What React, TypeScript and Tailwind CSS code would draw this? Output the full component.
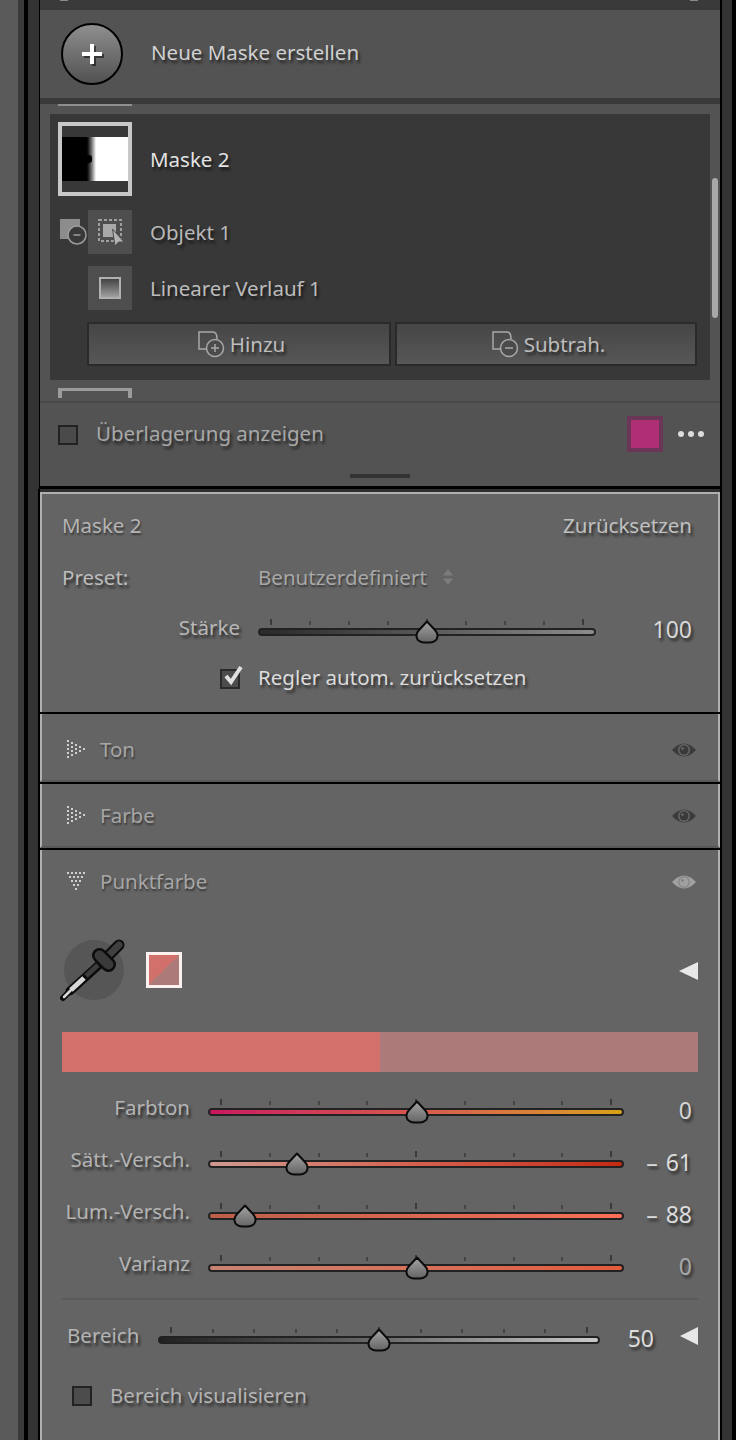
const shadow = '[text-shadow:2px_3px_3px_rgba(0,0,0,0.6)]';
const softShadow = '[text-shadow:1px_2px_2px_rgba(0,0,0,0.45)]';

function Thumb() {
  return (
    <svg width="24" height="24" viewBox="0 0 24 24" className="absolute -translate-x-1/2 -translate-y-1/2" style={{ left: 0, top: 0 }}>
      <defs>
        <linearGradient id="thumbFill" x1="0" y1="0" x2="0" y2="1">
          <stop offset="0" stopColor="#a4a4a4" />
          <stop offset="1" stopColor="#646464" />
        </linearGradient>
      </defs>
      <path d="M12 1.500 L19.500 9.500 Q23 13 22.500 16.500 C22 20 19 22.500 15 22.500 L9 22.500 C5 22.500 2 20 1.500 16.500 Q1 13 4.500 9.500 Z" fill="url(#thumbFill)" stroke="#0b0b0b" strokeWidth="2" strokeLinejoin="round" />
    </svg>
  );
}

function Slider({ trackClass, width, ticks, thumb }: { trackClass: string; width: string; ticks: number; thumb?: number }) {
  const mid = (ticks - 1) / 2;
  return (
    <div className={`relative ${width}`}>
      <div className="flex justify-between items-end h-[6px] mb-[3px] px-[12px]">
        {Array.from({ length: ticks }).map((_, i) => (
          <span key={i} className={i === 0 || i === ticks - 1 || i === mid ? 'w-[2px] h-[6px] bg-[#3a3a3a]' : 'w-[2px] h-[4px] bg-[#444444]'} />
        ))}
      </div>
      <div className={`relative h-[8px] rounded-full border-2 border-[#222222] ${trackClass}`}>
        {thumb !== undefined && (
          <div className="absolute top-1/2" style={{ left: `${thumb}%` }}>
            <Thumb />
          </div>
        )}
      </div>
    </div>
  );
}

function ColorRow({ label, value, valueClass, trackClass, thumb }: { label: string; value: string; valueClass: string; trackClass: string; thumb: number }) {
  return (
    <div className="flex items-center h-[52px]">
      <div className={`w-[130px] ml-[18px] text-right text-[20.5px] text-[#b4b4b4] ${shadow} -translate-y-[4px]`}>{label}</div>
      <div className="ml-[18px] -translate-y-[4px]">
        <Slider width="w-[416px]" ticks={9} trackClass={trackClass} thumb={thumb} />
      </div>
      <div className={`w-[68px] text-right text-[23px] [word-spacing:2px] ${valueClass} ${shadow} -translate-y-[2px]`}>{value}</div>
    </div>
  );
}

function DotTriangle({ open }: { open?: boolean }) {
  const rows = [5, 4, 3, 2, 1];
  const dots: { x: number; y: number }[] = [];
  rows.forEach((n, r) => {
    for (let i = 0; i < n; i++) {
      const a = r * 4;
      const b = (i - (n - 1) / 2) * 4;
      dots.push(open ? { x: 9 + b, y: 1 + a } : { x: 1 + a, y: 9 + b });
    }
  });
  return (
    <svg width="20" height="20" viewBox="0 0 20 20">
      {dots.map((d, i) => (
        <rect key={i} x={d.x} y={d.y} width="2" height="2" fill="#d0d0d0" />
      ))}
    </svg>
  );
}

function Eye({ dim }: { dim?: boolean }) {
  return (
    <svg width="26" height="18" viewBox="0 0 26 18" className="translate-y-[1px]">
      <path d="M1 9 Q13 -4 25 9 Q13 22 1 9 Z" fill={dim ? '#a0a0a0' : '#3a3a3a'} />
      <circle cx="13" cy="9" r="6" fill={dim ? '#888888' : '#666666'} />
      <circle cx="13" cy="9" r="4.500" fill={dim ? '#a0a0a0' : '#3a3a3a'} />
      <circle cx="11.500" cy="7.500" r="1.300" fill={dim ? '#7a7a7a' : '#6a6a6a'} />
    </svg>
  );
}

function SectionHead({ label, open, dim }: { label: string; open?: boolean; dim?: boolean }) {
  return (
    <div className="flex items-center justify-between pl-[24px] pr-[21px]">
      <div className="flex items-center gap-[14px]">
        <DotTriangle open={open} />
        <span className={`text-[20.5px] text-[#a6a6a6] ${softShadow}`}>{label}</span>
      </div>
      <Eye dim={dim} />
    </div>
  );
}

function AddIcon({ minus }: { minus?: boolean }) {
  return (
    <svg width="28" height="28" viewBox="0 0 28 28" fill="none" stroke="#a8a8a8" strokeWidth="1.500">
      <path d="M11 19 H2 V2 H16 Q20 2 20 9" />
      <circle cx="18" cy="18" r="8.500" fill="#4b4b4b" />
      <path d="M14 18 H22" />
      {!minus && <path d="M18 14 V22" />}
    </svg>
  );
}

function MaskButton({ label, minus, width }: { label: string; minus?: boolean; width: string }) {
  return (
    <div className={`${width} h-[44px] flex items-center justify-center gap-[5px] pl-[4px] border-2 border-[#2a2a2a] bg-gradient-to-b from-[#464646] to-[#575757] text-[20.5px] text-[#bdbdbd] ${shadow}`}>
      <AddIcon minus={minus} />
      <span>{label}</span>
    </div>
  );
}

export default function App() {
  return (
    <div className="w-[736px] h-[1440px] overflow-hidden flex bg-[#333333] font-['Noto_Sans','Open_Sans',sans-serif]">
      {/* linke Kante */}
      <div className="w-[18px] bg-[#5a5a5a]" />
      <div className="w-[6px] bg-[#3a3a3a]" />
      <div className="w-[4px] bg-black" />
      <div className="w-[10px] bg-[#333333]" />

      <div className="w-[684px] flex flex-col">
        {/* Masken-Panel */}
        <div className="h-[489px] ml-[1px] border-l border-r-2 border-b-[3px] border-black bg-[#3a3a3a] flex flex-col">
          <div className="h-[10px] flex justify-between items-start pl-[20px] pr-[22px]">
            <span className="w-[8px] h-[1px] bg-[#8a8a8a]" />
            <span className="w-[8px] h-[1px] bg-[#8a8a8a]" />
          </div>
          <div className="h-[88px] bg-[#535353] flex items-center pl-[21px]">
            <div className="w-[62px] h-[62px] rounded-full border-2 border-black bg-gradient-to-b from-[#8f8f8f] to-[#525252] flex items-center justify-center">
              <div className="relative w-[20px] h-[20px] drop-shadow-[2px_2px_0_rgba(0,0,0,0.5)]">
                <div className="absolute left-0 right-0 top-[8px] h-[4px] bg-white" />
                <div className="absolute top-0 bottom-0 left-[8px] w-[4px] bg-white" />
              </div>
            </div>
            <span className={`ml-[28px] text-[20.5px] text-[#d0d0d0] ${shadow} -translate-y-[2px]`}>Neue Maske erstellen</span>
          </div>
          <div className="h-[6px]" />

          {/* Maskenliste */}
          <div className="h-[297px] bg-[#535353] relative pl-[10px] pr-[10px] pt-[10px]">
            <div className="absolute left-[18px] top-0 w-[74px] h-[2px] bg-[#8f8f8f]" />
            <div className="h-[266px] bg-[#383838] relative">
              <div className="flex items-center pl-[8px] pt-[8px]">
                <div className="w-[74px] h-[74px] border-4 border-[#c8c8c8] bg-[#383838] flex items-center">
                  <div className="relative w-full h-[44px] flex">
                    <div className="w-[24px] bg-black" />
                    <div className="w-[10px] bg-gradient-to-r from-black to-white" />
                    <div className="flex-1 bg-white" />
                    <div className="absolute left-[24px] top-[18px] w-[6px] h-[8px] rounded-full bg-black" />
                  </div>
                </div>
                <span className={`ml-[18px] text-[20.5px] text-[#e2e2e2] ${shadow}`}>Maske 2</span>
              </div>

              <div className="flex items-center mt-[14px] pl-[10px]">
                <svg width="28" height="28" viewBox="0 0 28 28">
                  <rect x="0" y="1" width="20" height="20" fill="#8c8c8c" />
                  <circle cx="17" cy="17" r="9" fill="#383838" stroke="#9c9c9c" strokeWidth="1.500" />
                  <path d="M13.500 17 H20.500" stroke="#9c9c9c" strokeWidth="1.500" />
                </svg>
                <div className="w-[44px] h-[44px] bg-[#4e4e4e] flex items-center justify-center">
                  <svg width="28" height="28" viewBox="0 0 28 28" fill="none">
                    <rect x="3" y="2" width="22" height="21" stroke="#a0a0a0" strokeWidth="2" strokeDasharray="3 2" />
                    <rect x="7" y="6" width="13" height="13" fill="#a8a8a8" />
                    <path d="M16.500 11 L28 24 L22.500 24 L19 28 Z" fill="#b4b4b4" stroke="#4e4e4e" strokeWidth="1" />
                  </svg>
                </div>
                <span className={`ml-[18px] text-[20.5px] text-[#b8b8b8] ${shadow}`}>Objekt 1</span>
              </div>

              <div className="flex items-center mt-[12px] pl-[38px]">
                <div className="w-[44px] h-[44px] bg-[#4e4e4e] flex items-center justify-center">
                  <div className="w-[22px] h-[22px] border-2 border-[#b0b0b0] bg-gradient-to-b from-[#444444] to-[#a0a0a0]" />
                </div>
                <span className={`ml-[18px] text-[20.5px] text-[#bcbcbc] ${shadow}`}>Linearer Verlauf 1</span>
              </div>

              <div className="flex gap-[4px] pl-[37px] mt-[12px]">
                <MaskButton label="Hinzu" width="w-[304px]" />
                <MaskButton label="Subtrah." minus width="w-[302px]" />
              </div>

              {/* Scrollbalken */}
              <div className="absolute right-[-8px] top-[64px] w-[6px] h-[140px] rounded-full bg-[#a8a8a8]" />
            </div>
            <div className="absolute left-[18px] top-[284px] w-[74px] h-[10px] border-x-[4px] border-t-[3px] border-[#9c9c9c]" />
          </div>

          {/* Überlagerung */}
          <div className="flex-1 bg-[#535353] border-t-2 border-[#484848] relative flex items-center pl-[18px] pr-[16px] pb-[22px]">
            <div className="w-[20px] h-[20px] border-2 border-[#222222] bg-[#4a4a4a] translate-y-[1px]" />
            <span className={`ml-[18px] text-[20.5px] text-[#a8a8a8] ${shadow}`}>Überlagerung anzeigen</span>
            <div className="ml-auto w-[36px] h-[36px] border-4 border-[#6a3557] bg-[#ae2f74]" />
            <div className="flex gap-[4px] ml-[15px]">
              <span className="w-[6px] h-[6px] rounded-full bg-[#dcdcdc]" />
              <span className="w-[6px] h-[6px] rounded-full bg-[#dcdcdc]" />
              <span className="w-[6px] h-[6px] rounded-full bg-[#dcdcdc]" />
            </div>
            <div className="absolute left-[310px] bottom-[8px] w-[60px] h-[4px] bg-[#333333]" />
          </div>
        </div>

        {/* untere Panels */}
        <div className="flex-1 flex flex-col border-x-2 border-black">
          <div className="h-[3px] bg-[#2e2e2e]" />

          {/* Masken-Einstellungen */}
          <div className="h-[220px] bg-[#646464] border-x-2 border-t-2 border-[#b0b0b0] pt-[17px]">
            <div className="flex justify-between pl-[20px] pr-[26px] h-[32px] items-center -translate-y-[2px]">
              <span className={`text-[20.5px] text-[#b4b4b4] ${softShadow}`}>Maske 2</span>
              <span className={`text-[20.5px] text-[#c0c0c0] ${shadow}`}>Zurücksetzen</span>
            </div>
            <div className="flex items-center mt-[20px] h-[32px] -translate-y-[2px]">
              <span className={`ml-[20px] w-[196px] text-[20.5px] text-[#bcbcbc] ${shadow}`}>Preset:</span>
              <span className={`text-[20.5px] text-[#a8a8a8] ${softShadow}`}>Benutzerdefiniert</span>
              <svg width="12" height="18" viewBox="0 0 12 18" className="ml-[15px]">
                <path d="M6 1 L11 7.500 H1 Z M6 17 L11 10.500 H1 Z" fill="#7c7c7c" />
              </svg>
            </div>
            <div className="flex items-center mt-[18px] h-[32px]">
              <span className={`w-[198px] text-right text-[20.5px] text-[#b8b8b8] ${shadow} -translate-y-[2px]`}>Stärke</span>
              <div className="ml-[18px] -translate-y-[2px]">
                <Slider width="w-[338px]" ticks={9} trackClass="bg-gradient-to-r from-[#2a2a2a] to-[#8c8c8c]" thumb={50} />
              </div>
              <span className={`w-[96px] text-right text-[23px] text-[#d8d8d8] ${shadow}`}>100</span>
            </div>
            <div className="flex items-center mt-[18px] h-[32px] pl-[178px]">
              <div className="relative w-[20px] h-[20px] border-2 border-[#2a2a2a] bg-[#4c4c4c]">
                <svg width="26" height="26" viewBox="0 0 26 26" className="absolute -top-[8px] -left-[1px]">
                  <path d="M5 13 L10 19 L20 4" fill="none" stroke="#e0e0e0" strokeWidth="4" />
                </svg>
              </div>
              <span className={`ml-[18px] text-[20.5px] text-[#dcdcdc] ${shadow} -translate-y-[2px]`}>Regler autom. zurücksetzen</span>
            </div>
          </div>

          <div className="h-[2px] bg-black" />
          <div className="h-[68px] bg-[#646464] border-x-2 border-x-[#b0b0b0] border-b-2 border-b-[#585858] pt-[4px] flex flex-col justify-center">
            <SectionHead label="Ton" />
          </div>
          <div className="h-[2px] bg-black" />
          <div className="h-[64px] bg-[#646464] border-x-2 border-x-[#b0b0b0] border-b-2 border-b-[#585858] flex flex-col justify-center">
            <SectionHead label="Farbe" />
          </div>
          <div className="h-[2px] bg-black" />

          {/* Punktfarbe */}
          <div className="flex-1 bg-[#646464] border-x-2 border-[#b0b0b0] pt-[16px]">
            <SectionHead label="Punktfarbe" open dim />

            <div className="flex items-center h-[68px] mt-[39px] pl-[22px] pr-[18px]">
              <div className="relative w-[60px] h-[60px] rounded-full bg-[#565656]">
                <svg width="70" height="70" viewBox="0 0 70 70" className="absolute -left-[4px] -top-[4px]">
                  <path d="M3 62 L12 53" stroke="#0c0c0c" strokeWidth="6" strokeLinecap="round" />
                  <path d="M10 55 L40 28" stroke="#0c0c0c" strokeWidth="9" strokeLinecap="round" />
                  <path d="M4 61 L12 53" stroke="#d8d8d8" strokeWidth="2.500" strokeLinecap="round" />
                  <path d="M11 54 L24 42" stroke="#d8d8d8" strokeWidth="5" />
                  <path d="M26 40 L38 29" stroke="#3c3c3c" strokeWidth="5" />
                  <path d="M44 24 L59 9" stroke="#0c0c0c" strokeWidth="11" strokeLinecap="round" />
                  <path d="M44 24 L59 9" stroke="#3f3f3f" strokeWidth="7" strokeLinecap="round" />
                  <path d="M39.500 19.500 L48.500 28.500" stroke="#0c0c0c" strokeWidth="15" strokeLinecap="round" />
                  <path d="M39.500 19.500 L48.500 28.500" stroke="#3a3a3a" strokeWidth="10" strokeLinecap="round" />
                </svg>
              </div>
              <div className="ml-[22px] w-[36px] h-[36px] border-[3px] border-[#fdf1ef] bg-[linear-gradient(135deg,#d2706c_50%,#ad7a7a_50%)]" />
              <svg width="22" height="22" viewBox="0 0 22 22" className="ml-auto">
                <path d="M1 12 L20 3 V21 Z" fill="#e8e8e8" />
              </svg>
            </div>

            <div className="flex h-[40px] mt-[28px] mx-[20px]">
              <div className="flex-1 bg-[#d2706c]" />
              <div className="flex-1 bg-[#ad7a7a]" />
            </div>

            <div className="mt-[14px]">
              <ColorRow label="Farbton" value="0" valueClass="text-[#d4d4d4]" trackClass="bg-gradient-to-r from-[#c8155f] via-[#d6574e] to-[#d8a012]" thumb={50.3} />
              <ColorRow label="Sätt.-Versch." value="– 61" valueClass="text-[#dcdcdc]" trackClass="bg-gradient-to-r from-[#cf9a90] via-[#d5604e] to-[#c42810]" thumb={21} />
              <ColorRow label="Lum.-Versch." value="– 88" valueClass="text-[#dcdcdc]" trackClass="bg-gradient-to-r from-[#bd5f47] to-[#fa7059]" thumb={8.500} />
              <ColorRow label="Varianz" value="0" valueClass="text-[#a8a8a8]" trackClass="bg-gradient-to-r from-[#c98373] to-[#e45a3c]" thumb={50.3} />
            </div>

            <div className="h-[2px] bg-[#5a5a5a] mx-[20px] mt-[4px]" />

            <div className="flex items-center h-[52px] mt-[13px] pl-[25px]">
              <span className={`w-[91px] text-[20.5px] text-[#b4b4b4] ${shadow} -translate-y-[3px]`}>Bereich</span>
              <div className="-translate-y-[3px]">
                <Slider width="w-[442px]" ticks={11} trackClass="bg-gradient-to-r from-[#222222] via-[#6a6a6a] to-[#c8c8c8]" thumb={50} />
              </div>
              <span className={`w-[54px] text-right text-[23px] text-[#dcdcdc] ${shadow} -translate-y-[1px]`}>50</span>
              <svg width="22" height="22" viewBox="0 0 22 22" className="ml-[25px] -translate-y-[3px]">
                <path d="M1 11 L19 2 V20 Z" fill="#e8e8e8" />
              </svg>
            </div>

            <div className="flex items-center h-[32px] mt-[15px] pl-[30px]">
              <div className="w-[20px] h-[20px] border-2 border-[#222222] bg-[#4c4c4c]" />
              <span className={`ml-[18px] text-[20.5px] text-[#b4b4b4] ${shadow}`}>Bereich visualisieren</span>
            </div>
          </div>
        </div>
      </div>

      {/* rechte Kante */}
      <div className="w-[10px] bg-[#333333]" />
      <div className="w-[4px] bg-black" />
    </div>
  );
}
